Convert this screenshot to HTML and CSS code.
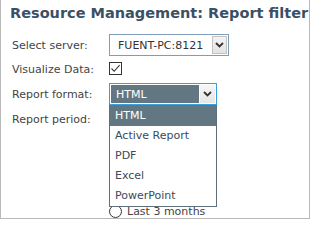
FILE: index.html
```html
<!DOCTYPE html>
<html>
<head>
<meta charset="utf-8">
<link rel="stylesheet" href="styles.css">
</head>
<body>
<div class="panel">
  <h1 class="title">Resource Management: Report filter</h1>
  <div class="form">
    <div class="label r1">Select server:</div>
    <div class="ctrl r1">
      <div class="select server">
        <span class="value">FUENT-PC:8121</span>
        <span class="btn"><svg width="9" height="6" viewBox="0 0 9 6"><path d="M1 1 L4.5 4.5 L8 1" fill="none" stroke="#333" stroke-width="1.8"/></svg></span>
      </div>
    </div>
    <div class="label r2">Visualize Data:</div>
    <div class="ctrl r2">
      <span class="check"><svg width="11" height="11" viewBox="0 0 11 11"><path d="M1.5 5.5 L4.2 8.3 L9.6 2.2" fill="none" stroke="#333" stroke-width="1.1"/></svg></span>
    </div>
    <div class="label r3">Report format:</div>
    <div class="ctrl r3">
      <div class="select format">
        <span class="value">HTML</span>
        <span class="btn"><svg width="9" height="6" viewBox="0 0 9 6"><path d="M1 1 L4.5 4.5 L8 1" fill="none" stroke="#333" stroke-width="1.8"/></svg></span>
        <ul class="dropdown">
          <li class="sel">HTML</li>
          <li>Active Report</li>
          <li>PDF</li>
          <li>Excel</li>
          <li>PowerPoint</li>
        </ul>
      </div>
    </div>
    <div class="label r4">Report period:</div>
    <div class="ctrl r4 radios">
      <label class="radio"><span class="dot"></span>Last 3 months</label>
    </div>
  </div>
</div>
</body>
</html>
```

FILE: styles.css
```css
html, body {
  margin: 0;
  padding: 0;
  background: #fff;
  overflow: hidden;
}
body {
  width: 311px;
  height: 220px;
  font-family: "DejaVu Sans", sans-serif;
  font-size: 11px;
  color: #444;
}
.panel {
  box-sizing: border-box;
  width: 310px;
  height: 219px;
  border: 1px solid #b9b9b9;
  border-top: none;
  overflow: hidden;
}
.title {
  margin: 0;
  padding: 3px 0 0 9px;
  height: 30px;
  box-sizing: border-box;
  font-size: 14.5px;
  line-height: 20px;
  font-weight: bold;
  color: #3b5064;
  white-space: nowrap;
}
.form {
  display: grid;
  grid-template-columns: 97px 1fr;
  grid-template-rows: 3px 24px 24px 26px auto;
  padding-left: 11px;
}
.form::before {
  content: "";
  grid-column: 1 / 3;
}
.label {
  display: flex;
  align-items: center;
  white-space: nowrap;
}
.label.r4 {
  align-items: flex-start;
  padding-top: 6px;
  height: 26px;
  box-sizing: border-box;
}
.ctrl {
  display: flex;
  align-items: center;
}
.select {
  position: relative;
  box-sizing: border-box;
  height: 22px;
  display: flex;
  align-items: stretch;
}
.select .value {
  flex: 1;
  display: flex;
  align-items: center;
  padding-left: 7px;
  white-space: nowrap;
}
.select .btn {
  width: 15px;
  display: flex;
  align-items: center;
  justify-content: center;
  box-sizing: border-box;
}
.server {
  width: 120px;
  border: 1px solid #7f9db9;
  background: #fff;
  color: #333;
  padding: 1px;
}
.server .btn {
  background: linear-gradient(#f4f4f4, #e2e2e2);
  border: 1px solid #c3c3c3;
}
.format {
  width: 108px;
  border: 1px solid #3aa0dc;
  padding: 1px;
  background: #fff;
}
.format .value {
  background: #627782;
  color: #fff;
  padding-left: 5px;
  margin-right: 1px;
}
.format .btn {
  background: linear-gradient(#f6f6f6, #e6e6e6);
}
.check {
  box-sizing: border-box;
  width: 13px;
  height: 13px;
  border: 1px solid #333;
  display: flex;
  align-items: center;
  justify-content: center;
  margin-top: -2px;
}
.dropdown {
  position: absolute;
  top: 21px;
  left: -1px;
  width: 108px;
  box-sizing: border-box;
  margin: 0;
  padding: 0;
  list-style: none;
  border: 1px solid #5f707c;
  border-top: none;
  background: #fff;
  z-index: 5;
}
.dropdown li {
  height: 20px;
  line-height: 20px;
  padding-left: 5px;
  color: #3b4a58;
  white-space: nowrap;
}
.dropdown li.sel {
  background: #627782;
  color: #fff;
  height: 21px;
  line-height: 21px;
}
.radios {
  flex-direction: column;
  align-items: flex-start;
}
.radio {
  display: flex;
  align-items: center;
  height: 22px;
  margin-top: 93px;
  white-space: nowrap;
}
.dot {
  box-sizing: border-box;
  width: 13px;
  height: 13px;
  border: 1px solid #333;
  border-radius: 50%;
  margin-right: 5px;
}
```
